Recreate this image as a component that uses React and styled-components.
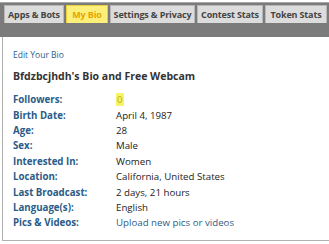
import React from 'react'
import styled, { createGlobalStyle } from 'styled-components'

const GlobalStyle = createGlobalStyle`
    html, body {
        margin: 0;
        padding: 0;
        background: #ffffff;
    }
    body {
        font-family: "Open Sans", "DejaVu Sans", sans-serif;
    }
`

const tabs = [
    { name: 'Apps & Bots', width: 60 },
    { name: 'My Bio', width: 42 },
    { name: 'Settings & Privacy', width: 85 },
    { name: 'Contest Stats', width: 66 },
    { name: 'Token Stats', width: 62 },
]

const rows = [
    { label: 'Followers:', value: '0', kind: 'followers' },
    { label: 'Birth Date:', value: 'April 4, 1987' },
    { label: 'Age:', value: '28' },
    { label: 'Sex:', value: 'Male' },
    { label: 'Interested In:', value: 'Women' },
    { label: 'Location:', value: 'California, United States' },
    { label: 'Last Broadcast:', value: '2 days, 21 hours' },
    { label: 'Language(s):', value: 'English' },
    { label: 'Pics & Videos:', value: 'Upload new pics or videos', kind: 'link' },
]

function App() {
    return (
        <>
            <GlobalStyle />
            <Page>
                <TabBar>
                    {tabs.map((t) => (
                        <Tab key={t.name} $width={t.width} $active={t.name === 'My Bio'}>{t.name}</Tab>
                    ))}
                </TabBar>
                <Content>
                    <EditLink>Edit Your Bio</EditLink>
                    <Title>Bfdzbcjhdh's Bio and Free Webcam</Title>
                    <Table>
                        {rows.map((r) => (
                            <React.Fragment key={r.label}>
                                <Label>{r.label}</Label>
                                <Value $kind={r.kind}>
                                    {r.kind === 'followers' ? <Highlight>{r.value}</Highlight> : r.value}
                                </Value>
                            </React.Fragment>
                        ))}
                    </Table>
                </Content>
            </Page>
        </>
    )
}

export default App

const Page = styled.div`
    width: 329px;
    height: 244px;
    padding-top: 2px;
    box-sizing: border-box;
`

const TabBar = styled.div`
    height: 35px;
    background-color: #7b7b7b;
    border-top: 1px solid #a8a8a8;
    display: flex;
    align-items: flex-start;
    gap: 2px;
    padding: 2px 0 0 4px;
    box-sizing: border-box;
    overflow: hidden;
`

const Tab = styled.div`
    flex: none;
    width: ${(p) => p.$width}px;
    height: 18px;
    box-sizing: border-box;
    display: flex;
    align-items: center;
    justify-content: center;
    white-space: nowrap;
    font-size: 9px;
    font-weight: 700;
    letter-spacing: -0.15px;
    background-color: ${(p) => (p.$active ? '#fdf07a' : '#dcdcdc')};
    color: ${(p) => (p.$active ? '#e7a400' : '#444444')};
    border: 1px solid ${(p) => (p.$active ? '#e6cf3a' : '#b8b8b8')};
    border-bottom: none;
`

const Content = styled.div`
    margin-left: 2px;
    width: 327px;
    height: 204px;
    border-left: 1px solid #b0b0b0;
    border-bottom: 1px solid #b0b0b0;
    box-sizing: border-box;
    padding: 12px 0 0 10px;
`

const EditLink = styled.div`
    font-size: 8.5px;
    color: #2e5d86;
`

const Title = styled.div`
    margin-top: 9px;
    font-size: 10.5px;
    font-weight: 700;
    color: #333333;
`

const Table = styled.div`
    margin-top: 9px;
    display: grid;
    grid-template-columns: 103px 1fr;
    grid-auto-rows: 15.4px;
    align-items: center;
    font-size: 9.7px;
`

const Label = styled.div`
    font-weight: 700;
    color: #2b5b87;
`

const Value = styled.div`
    color: ${(p) => (p.$kind === 'link' ? '#2e5d86' : '#222222')};
`

const Highlight = styled.span`
    background-color: #f4f56a;
    color: #c9a800;
    padding: 0 1px;
`
